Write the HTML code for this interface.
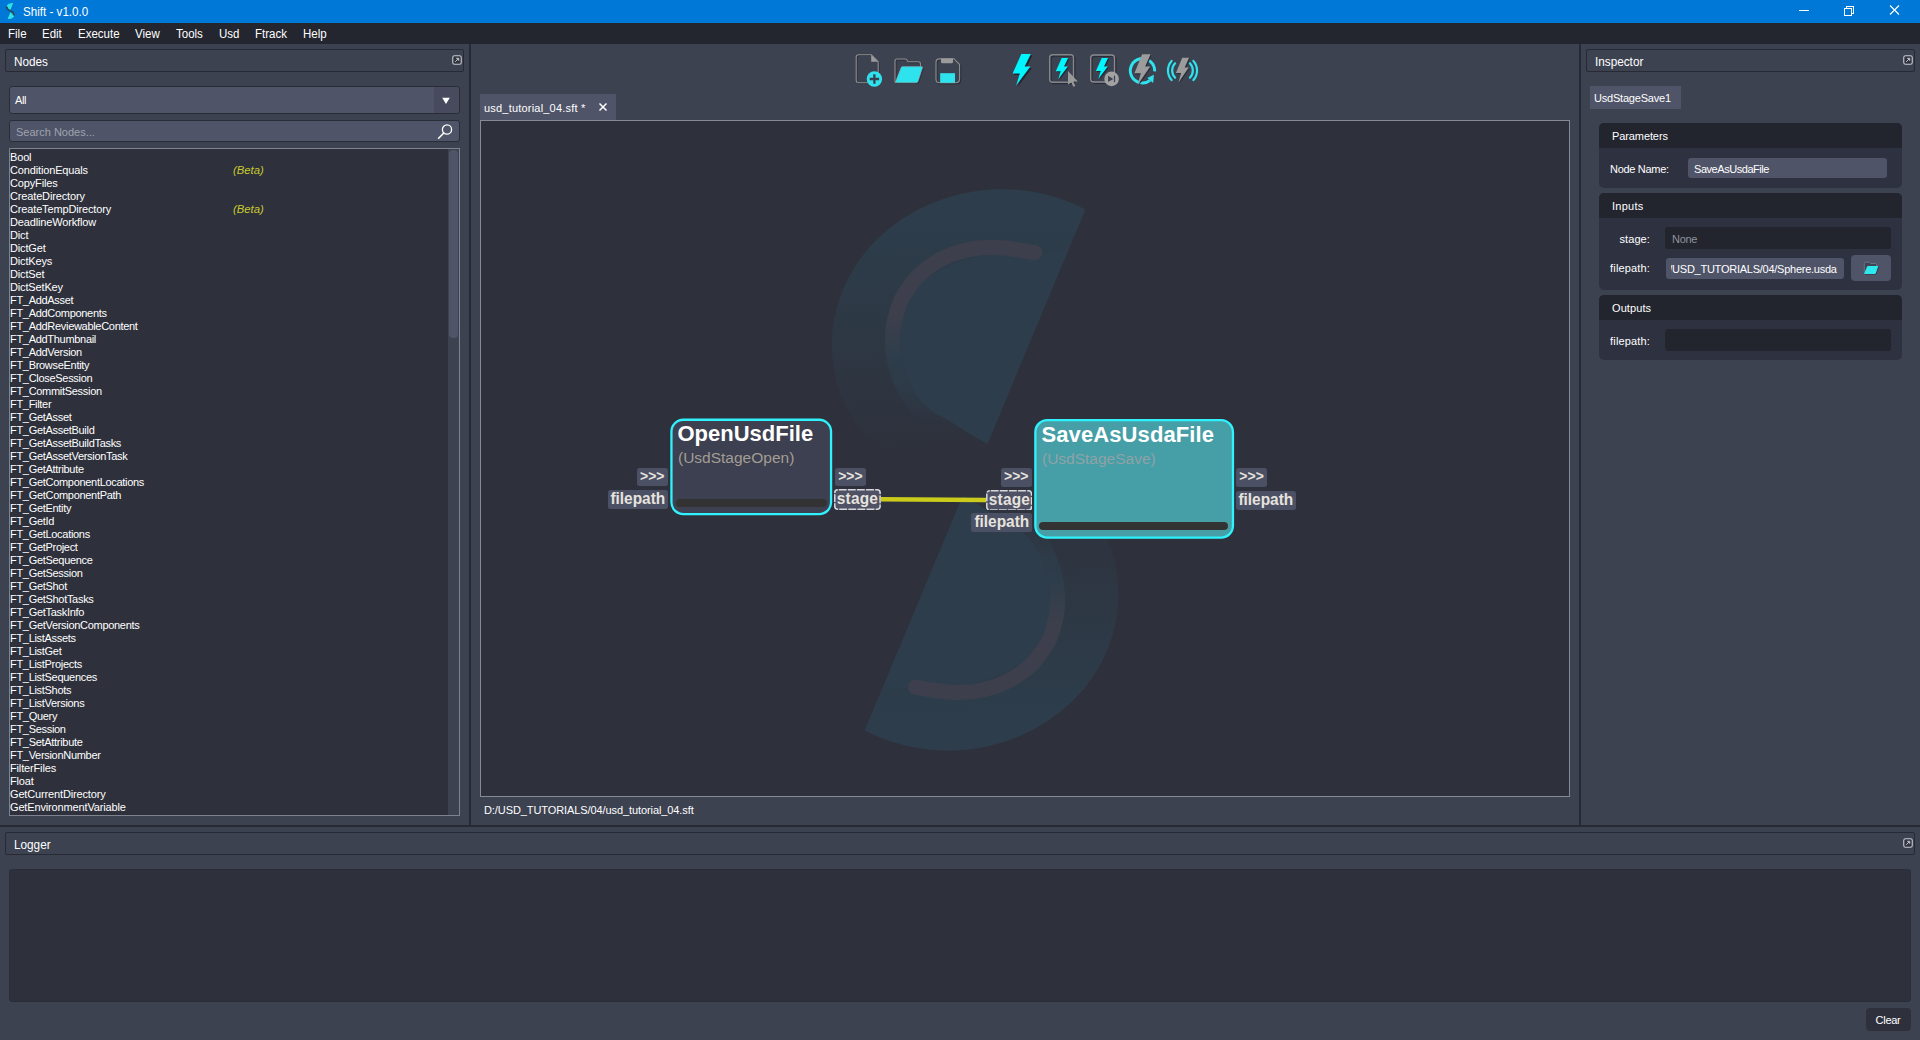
<!DOCTYPE html>
<html><head><meta charset="utf-8"><title>Shift - v1.0.0</title>
<style>
*{box-sizing:border-box;margin:0;padding:0}
html,body{width:1920px;height:1040px;overflow:hidden;background:#3d4251;font-family:"Liberation Sans",sans-serif;color:#fff}
.abs{position:absolute}
div,span,svg{position:absolute}
.t{white-space:nowrap;line-height:1}
#titlebar{left:0;top:0;width:1920px;height:23px;background:#0078d7}
#menubar{left:0;top:23px;width:1920px;height:21px;background:#23252f}
.menu{top:27px;transform:scaleX(.935);transform-origin:left;font-size:12.3px;color:#fff;white-space:nowrap;line-height:14px}
.hdr{height:23px;border:1px solid #272a35;border-radius:2px;background:#3d4251}
.hdr .t{left:8px;top:5px;font-size:12.5px;line-height:14px;color:#fff;transform:scaleX(.94);transform-origin:left}
.vline{width:2px;background:#272a35}
.hline{height:2px;background:#272a35}
.li{left:10px;height:13px;font-size:11px;letter-spacing:-.15px;line-height:13px;color:#fff;white-space:nowrap;width:430px}
.li .beta{left:223px;top:0;font-style:italic;color:#c9c92e;position:absolute;letter-spacing:0;font-size:11.3px}
.grp{background:#2e3240;border-radius:5px;overflow:hidden}
.grp .gh{left:0;top:0;width:100%;height:25px;background:#22242e}
.lbl{font-size:11px;letter-spacing:-.3px;line-height:13px;color:#fff;white-space:nowrap}
.fld{border-radius:3px;background:#22242e}
.inp{border-radius:3px;background:#4f5468}
.node{border:2.3px solid #2ff0fb;border-radius:13px}
.ntitle{font-weight:bold;font-size:22px;line-height:26px;color:#fff;white-space:nowrap;transform-origin:left top}
.nsub{font-size:15.5px;line-height:18px;white-space:nowrap;transform-origin:left top}
.nbar{background:#333;border-radius:4px}
.chip{background:#4c5064;border-radius:2.5px;color:#e6e3de;font-weight:bold;font-size:15.5px;line-height:18px;text-align:center;white-space:nowrap}
.chip.dash{border-radius:4px;line-height:19.5px;background:#4f5165}
.chip span{position:static;display:inline-block;transform:scaleX(.92);font-size:16.8px}
.chip.dash span{letter-spacing:.2px}
.li.ft{letter-spacing:-.3px}
.chip.arr{font-size:14px;line-height:16.5px}

</style></head>
<body>
<div id="titlebar"></div>
<div class="t" style="left:23px;top:5px;font-size:12.3px;transform:scaleX(.945);transform-origin:left;color:#fff;line-height:14px">Shift - v1.0.0</div>
<svg style="left:1790px;top:0" width="130" height="23" viewBox="0 0 130 23"><g stroke="#fff" stroke-width="1" fill="none" shape-rendering="crispEdges"><path d="M9 10.5h10"/><path d="M54.5 8.5h7v7h-7z"/><path d="M56.5 8.5v-2h7v7h-2"/></g><path d="M100 5.5l9 9M109 5.5l-9 9" stroke="#fff" stroke-width="1.1" fill="none"/></svg>
<svg style="left:5px;top:2px" width="11" height="18" viewBox="0 0 11 18"><path d="M8.2 1L5.200 8.5Q1.300 7 1.800 3.500Q3.500 .6 8.200 1Z" fill="#2fe0e6"/><path d="M2.600 17L5.700 9.400Q9.600 11 9 14.500Q7.300 17.400 2.600 17Z" fill="#2fe0e6"/><path d="M1.500 4.500Q1.800 7.500 5.500 9Q8.800 10.500 9 13.500" fill="none" stroke="#23485c" stroke-width="2" opacity=".9"/></svg>
<div id="menubar"></div>
<div class="menu" style="left:8px">File</div>
<div class="menu" style="left:42px">Edit</div>
<div class="menu" style="left:78px">Execute</div>
<div class="menu" style="left:135px">View</div>
<div class="menu" style="left:176px">Tools</div>
<div class="menu" style="left:219px">Usd</div>
<div class="menu" style="left:255px">Ftrack</div>
<div class="menu" style="left:303px">Help</div>

<!-- splitters -->
<div class="vline" style="left:469px;top:44px;height:782px"></div>
<div class="vline" style="left:1579px;top:44px;height:782px"></div>
<div class="hline" style="left:0;top:825px;width:1920px"></div>

<!-- Nodes panel -->
<div class="hdr" style="left:5px;top:49px;width:459px"><div class="t">Nodes</div></div>
<div style="left:9px;top:86px;width:451px;height:28px;background:#4f5468;border:1px solid #2a2d38;border-radius:3px"></div>
<div style="left:434px;top:87px;width:25px;height:26px;background:#474b5d;border-radius:0 3px 3px 0"></div>
<div class="t" style="left:15px;top:95px;font-size:11px;letter-spacing:-.35px;color:#fff">All</div>
<svg style="left:441px;top:97px" width="10" height="8" viewBox="0 0 10 8"><path d="M1.2 0.8h7.6L5 7z" fill="#fff"/></svg>
<div style="left:9px;top:120px;width:451px;height:22px;background:#4f5468;border:1px solid #2a2d38;border-radius:3px"></div>
<div class="t" style="left:16px;top:127px;font-size:11px;color:#a0a3ae">Search Nodes...</div>
<svg style="left:436px;top:122px" width="20" height="19" viewBox="0 0 20 19"><circle cx="11" cy="7.5" r="4.6" fill="none" stroke="#fff" stroke-width="1.3"/><path d="M7.8 11L2.6 16.2" stroke="#fff" stroke-width="1.6" stroke-linecap="round"/></svg>
<div style="left:9px;top:148px;width:451px;height:668px;background:#2e313c;border:1px solid #7f8390"></div>
<div style="left:448px;top:149px;width:11px;height:666px;background:#3d4251"></div>
<div style="left:449px;top:150px;width:8.5px;height:188px;background:#4f5468;border-radius:4px"></div>
<div class="li" style="top:151px">Bool</div>
<div class="li" style="top:164px">ConditionEquals<span class="beta">(Beta)</span></div>
<div class="li" style="top:177px">CopyFiles</div>
<div class="li" style="top:190px">CreateDirectory</div>
<div class="li" style="top:203px">CreateTempDirectory<span class="beta">(Beta)</span></div>
<div class="li" style="top:216px">DeadlineWorkflow</div>
<div class="li" style="top:229px">Dict</div>
<div class="li" style="top:242px">DictGet</div>
<div class="li" style="top:255px">DictKeys</div>
<div class="li" style="top:268px">DictSet</div>
<div class="li" style="top:281px">DictSetKey</div>
<div class="li ft" style="top:294px">FT_AddAsset</div>
<div class="li ft" style="top:307px">FT_AddComponents</div>
<div class="li ft" style="top:320px">FT_AddReviewableContent</div>
<div class="li ft" style="top:333px">FT_AddThumbnail</div>
<div class="li ft" style="top:346px">FT_AddVersion</div>
<div class="li ft" style="top:359px">FT_BrowseEntity</div>
<div class="li ft" style="top:372px">FT_CloseSession</div>
<div class="li ft" style="top:385px">FT_CommitSession</div>
<div class="li ft" style="top:398px">FT_Filter</div>
<div class="li ft" style="top:411px">FT_GetAsset</div>
<div class="li ft" style="top:424px">FT_GetAssetBuild</div>
<div class="li ft" style="top:437px">FT_GetAssetBuildTasks</div>
<div class="li ft" style="top:450px">FT_GetAssetVersionTask</div>
<div class="li ft" style="top:463px">FT_GetAttribute</div>
<div class="li ft" style="top:476px">FT_GetComponentLocations</div>
<div class="li ft" style="top:489px">FT_GetComponentPath</div>
<div class="li ft" style="top:502px">FT_GetEntity</div>
<div class="li ft" style="top:515px">FT_GetId</div>
<div class="li ft" style="top:528px">FT_GetLocations</div>
<div class="li ft" style="top:541px">FT_GetProject</div>
<div class="li ft" style="top:554px">FT_GetSequence</div>
<div class="li ft" style="top:567px">FT_GetSession</div>
<div class="li ft" style="top:580px">FT_GetShot</div>
<div class="li ft" style="top:593px">FT_GetShotTasks</div>
<div class="li ft" style="top:606px">FT_GetTaskInfo</div>
<div class="li ft" style="top:619px">FT_GetVersionComponents</div>
<div class="li ft" style="top:632px">FT_ListAssets</div>
<div class="li ft" style="top:645px">FT_ListGet</div>
<div class="li ft" style="top:658px">FT_ListProjects</div>
<div class="li ft" style="top:671px">FT_ListSequences</div>
<div class="li ft" style="top:684px">FT_ListShots</div>
<div class="li ft" style="top:697px">FT_ListVersions</div>
<div class="li ft" style="top:710px">FT_Query</div>
<div class="li ft" style="top:723px">FT_Session</div>
<div class="li ft" style="top:736px">FT_SetAttribute</div>
<div class="li ft" style="top:749px">FT_VersionNumber</div>
<div class="li" style="top:762px">FilterFiles</div>
<div class="li" style="top:775px">Float</div>
<div class="li" style="top:788px">GetCurrentDirectory</div>
<div class="li" style="top:801px">GetEnvironmentVariable</div>

<!-- center -->
<svg style="left:850px;top:48px" width="360" height="44" viewBox="850 48 360 44">
<defs>
<path id="bolt" d="M8.7 0H18.2L12.1 12.5H17.8L3.6 31.3L7.2 19.5H0Z"/>
</defs>
<!-- new file -->
<g fill="none" stroke-linejoin="round">
<path d="M859.5 55.5h12.5l7 7v18.5q0 2.5-2.5 2.5h-17q-2.5 0-2.5-2.5v-23q0-2.5 2.5-2.5z" stroke="#2a2d38" stroke-width="1.2"/>
<path d="M858.7 54.7h12.5l7 7v18.5q0 2.5-2.5 2.5h-17q-2.5 0-2.5-2.5v-23q0-2.5 2.5-2.5z" stroke="#8e8e90" stroke-width="1.1"/>
</g>
<path d="M871.2 54.7l7 7h-7z" fill="#9b9b9b"/>
<circle cx="874.4" cy="79" r="7.7" fill="#2ee3ee"/>
<path d="M874.4 74.3v9.4M869.7 79h9.4" stroke="#3a3f4d" stroke-width="2.3"/>
<!-- open -->
<g fill="none" stroke-linejoin="round">
<path d="M896 82.8q-1 0-1-1.2V61q0-2 2-2h8.2q1.2 0 1.8 1l1 1.8h10q2.600 0 2.600 2.600v2" stroke="#2a2d38" stroke-width="1.2" transform="translate(0.9 0.9)"/>
<path d="M896 82.8q-1 0-1-1.2V61q0-2 2-2h8.2q1.2 0 1.8 1l1 1.8h10q2.600 0 2.600 2.600v2" stroke="#8e8e90" stroke-width="1.1"/>
</g>
<path d="M901 67.800q.5-1.200 1.800-1.200h18.800q1.300 0 .9 1.300l-4.300 13.300q-.5 1.600-2.200 1.600h-19.500q-1.300 0-.9-1.300z" fill="#2a2d38" transform="translate(1 1)"/>
<path d="M901 67.800q.5-1.200 1.800-1.200h18.800q1.300 0 .9 1.300l-4.300 13.300q-.5 1.600-2.200 1.600h-19.500q-1.300 0-.9-1.300z" fill="#2ee3ee" stroke="#9a9a9a" stroke-width=".5"/>
<!-- save -->
<g fill="none" stroke-linejoin="round">
<path d="M939.500 58.900h14.500l5.600 5.600v14.300q0 4-4 4h-16.100q-3.500 0-3.500-3.500v-16.900q0-3.500 3.500-3.500z" stroke="#2a2d38" stroke-width="1.3" transform="translate(1 1)"/>
<path d="M939.500 58.900h14.500l5.600 5.600v14.300q0 4-4 4h-16.100q-3.500 0-3.500-3.500v-16.900q0-3.500 3.500-3.500z" stroke="#8e8e90" stroke-width="1.1"/>
</g>
<path d="M941 58.500h12v3.300q0 1.500-1.500 1.500h-9q-1.500 0-1.500-1.500z" fill="#9b9b9b"/>
<rect x="940.200" y="73.200" width="14.800" height="9.600" fill="#2ee3ee"/>
<!-- bolt 1 -->
<use href="#bolt" x="1014.1" y="55.600" fill="#23252f"/>
<use href="#bolt" x="1012.600" y="54.100" fill="#00f6ff"/>
<!-- bolt in box + cursor -->
<rect x="1051" y="56" width="23.800" height="27.600" rx="3" fill="none" stroke="#2a2d38" stroke-width="1.400"/>
<rect x="1049.700" y="54.700" width="23.800" height="27.600" rx="3" fill="none" stroke="#85868c" stroke-width="1.400"/>
<g transform="translate(1056.800 58.900) scale(.68)"><use href="#bolt" fill="#23252f"/></g>
<g transform="translate(1055.800 57.900) scale(.68)"><use href="#bolt" fill="#00f6ff"/></g>
<path d="M1068 71V84.800L1071.300 82.200L1073.300 86.800L1075.300 86L1073.300 81.600H1077.800Z" fill="#9a9a9a"/>
<!-- bolt in box + play -->
<rect x="1092" y="56.300" width="23.800" height="27" rx="3" fill="none" stroke="#2a2d38" stroke-width="1.300"/>
<rect x="1090.700" y="55" width="23.800" height="27" rx="3" fill="none" stroke="#8a8b90" stroke-width="1.300"/>
<g transform="translate(1096.900 59) scale(.67)"><use href="#bolt" fill="#23252f"/></g>
<g transform="translate(1095.900 58) scale(.67)"><use href="#bolt" fill="#00f6ff"/></g>
<circle cx="1111.600" cy="78.900" r="7.300" fill="#a2a2a2"/>
<path d="M1108.100 75.700v6.400l5.200-3.200z" fill="#3d4251"/>
<path d="M1114.500 75.700v6.400" stroke="#3d4251" stroke-width="1.200"/>
<!-- refresh bolt -->
<path d="M1154.670 71.350A12.200 12.200 0 1 0 1150.100 80.300" fill="none" stroke="#2ee3ee" stroke-width="3"/>
<path d="M1153.900 74.800L1147.300 78L1153.200 82.900Z" fill="#2ee3ee"/>
<g transform="translate(1135.400 55.250) scale(.89 .98)"><use href="#bolt" fill="#2a2d38"/></g>
<g transform="translate(1134.400 54.250) scale(.89 .98)"><use href="#bolt" fill="#9c9c9c"/></g>
<!-- waves bolt -->
<g fill="none" stroke="#2ee3ee" stroke-width="2.200" stroke-linecap="round">
<path d="M1175.100 63.300A10.300 10.300 0 0 0 1175.100 77.700"/>
<path d="M1189.900 63.300A10.300 10.300 0 0 1 1189.900 77.700"/>
<path d="M1171.600 60.900A14.500 14.500 0 0 0 1171.600 80.100"/>
<path d="M1193.400 60.900A14.500 14.500 0 0 1 1193.400 80.100"/>
</g>
<g transform="translate(1176.900 58.700) scale(.725 .79)"><use href="#bolt" fill="#2a2d38"/></g>
<g transform="translate(1175.900 57.700) scale(.725 .79)"><use href="#bolt" fill="#9c9c9c"/></g>
</svg>

<div style="left:480px;top:94px;width:136px;height:27px;background:#4f5468"></div>
<div class="t" style="left:484px;top:103px;font-size:11px;letter-spacing:.2px;color:#fff">usd_tutorial_04.sft *</div>
<svg style="left:598px;top:102px" width="10" height="10" viewBox="0 0 10 10"><path d="M1.5 1.5l7 7M8.5 1.5l-7 7" stroke="#fff" stroke-width="1.5"/></svg>
<div id="graph" style="left:480px;top:120px;width:1090px;height:677px;background:#2e313c;border:1px solid #868a96;overflow:hidden">
<svg style="left:0;top:0" width="1088" height="675" viewBox="481 121 1088 675">
<defs>
<linearGradient id="gO" gradientUnits="userSpaceOnUse" x1="0" y1="225" x2="0" y2="450"><stop offset="0" stop-color="#2d3d4b"/><stop offset="1" stop-color="#2d3d4b" stop-opacity="0"/></linearGradient>
<linearGradient id="gS" gradientUnits="userSpaceOnUse" x1="0" y1="315" x2="0" y2="428"><stop offset="0" stop-color="#3d3f4c"/><stop offset=".4" stop-color="#2e3d4b"/><stop offset="1" stop-color="#2d3d4b" stop-opacity="0"/></linearGradient>
<clipPath id="cutL"><path d="M1124.7 117.1L890.6 669.5L500 669.5L500 117.1Z"/></clipPath>
<g id="half">
<g clip-path="url(#cutL)"><ellipse cx="1001" cy="343.800" rx="169.200" ry="154.600" transform="rotate(-2.330 1001 343.800)" fill="url(#gO)"/></g>
<path d="M987.7 443.8C984.4 442.0 974.6 436.8 968.1 432.9C961.6 429.0 954.0 423.9 948.5 420.6C943.0 417.3 939.5 415.9 935.4 413.2C931.3 410.5 927.2 407.3 923.9 404.2C920.6 401.1 918.5 398.8 915.8 394.4C913.1 390.0 909.9 384.1 907.6 378.1C905.3 372.1 903.1 365.3 901.9 358.5C900.7 351.7 900.2 343.5 900.2 337.2C900.2 330.9 900.4 327.2 901.9 320.9C903.4 314.6 905.5 306.4 909.2 299.6C912.9 292.8 916.3 286.0 923.9 280.0C931.5 274.0 945.2 267.7 954.6 263.7C964.0 259.7 970.8 257.6 980.0 256.0C989.2 254.4 1005.0 254.3 1010.0 254.0L1068.4 250.0Z" fill="#2d3d4b"/>
<path d="M1034.6 252.7C1031.6 252.2 1023.9 250.5 1016.7 249.6C1009.6 248.7 1000.0 247.2 991.7 247.2C983.4 247.3 975.0 248.1 966.7 250.0C958.4 251.9 949.4 255.0 941.7 258.9C934.1 262.8 926.1 268.7 920.8 273.3C915.4 277.9 913.0 281.8 909.6 286.6C906.2 291.4 902.9 295.6 900.2 302.0C897.6 308.4 895.0 318.4 893.7 325.0C892.4 331.6 892.5 335.5 892.6 341.3C892.7 347.1 893.1 353.3 894.5 360.0C895.9 366.7 898.4 374.9 901.0 381.3C903.6 387.7 906.7 393.6 910.0 398.5C913.3 403.4 916.6 407.1 920.6 410.7C924.6 414.3 928.8 417.0 933.7 420.1C938.6 423.2 947.3 427.9 950.0 429.5" fill="none" stroke="url(#gS)" stroke-width="15" stroke-linecap="round"/>
</g>
</defs>
<use href="#half"/>
<use href="#half" transform="rotate(180 975.1 469.9)"/>
<path d="M880.5 499.2L986.3 500" stroke="#cbcb1c" stroke-width="4.6"/>
<rect x="671.450" y="419.750" width="159.600" height="94.400" rx="11.850" fill="#3c4050" stroke="#2ff2fd" stroke-width="2.300"/>
<rect x="1035.350" y="420.150" width="197.600" height="117.500" rx="11.850" fill="#469ea6" stroke="#2ff2fd" stroke-width="2.300"/>
</svg>
<div id="gw" style="left:-481px;top:-121px;width:1920px;height:1040px">
<div class="ntitle" style="left:677.5px;top:420.5px">OpenUsdFile</div>
<div class="nsub" style="left:678px;top:449px;color:#a39d94">(UsdStageOpen)</div>
<div class="nbar" style="left:676px;top:499px;width:151px;height:8px"></div>
<div class="chip arr" style="left:637px;top:468px;width:30.5px;height:18.3px">&gt;&gt;&gt;</div>
<div class="chip arr" style="left:835.2px;top:468px;width:30.5px;height:18.3px">&gt;&gt;&gt;</div>
<div class="chip" style="left:608px;top:490px;width:60px;height:19px"><span>filepath</span></div>
<div class="chip dash" style="left:833.900px;top:489px;width:46.900px;height:21.100px"><svg style="left:0;top:0" width="46.9" height="21.1" viewBox="0 0 46.9 21.1"><rect x=".8" y=".8" width="45.3" height="19.5" rx="3" fill="none" stroke="#d8d8dc" stroke-width="1.500" stroke-dasharray="7.800 1.300" stroke-dashoffset="-1"/></svg><span>stage</span></div>

<div class="ntitle" style="left:1041.5px;top:421.5px;letter-spacing:.1px">SaveAsUsdaFile</div>
<div class="nsub" style="left:1042px;top:450px;color:#8fa3a8">(UsdStageSave)</div>
<div class="nbar" style="left:1039px;top:522px;width:189px;height:8px"></div>
<div class="chip arr" style="left:1001px;top:468.3px;width:30.5px;height:18.7px">&gt;&gt;&gt;</div>
<div class="chip arr" style="left:1236.2px;top:468.3px;width:30.8px;height:18.7px">&gt;&gt;&gt;</div>
<div class="chip dash" style="left:985.900px;top:489.600px;width:46.300px;height:20.900px"><svg style="left:0;top:0" width="46.3" height="20.9" viewBox="0 0 46.3 20.9"><rect x=".8" y=".8" width="44.699999999999996" height="19.299999999999997" rx="3" fill="none" stroke="#d8d8dc" stroke-width="1.500" stroke-dasharray="7.800 1.300" stroke-dashoffset="-1"/></svg><span>stage</span></div>
<div class="chip" style="left:971px;top:513px;width:61px;height:19px"><span>filepath</span></div>
<div class="chip" style="left:1236px;top:491px;width:60px;height:19px"><span>filepath</span></div>
</div>
</div>
<div class="t" style="left:484px;top:805px;font-size:11px;letter-spacing:-.09px;color:#fff">D:/USD_TUTORIALS/04/usd_tutorial_04.sft</div>

<!-- Inspector -->
<div class="hdr" style="left:1586px;top:49px;width:329px"><div class="t">Inspector</div></div>
<div style="left:1590px;top:86px;width:91px;height:23px;background:#4f5468"></div>
<div class="t" style="left:1594px;top:93px;font-size:11px;letter-spacing:-.2px;color:#fff">UsdStageSave1</div>

<div class="grp" style="left:1599px;top:123px;width:303px;height:65px"><div class="gh"></div></div>
<div class="lbl" style="left:1612px;top:130px;letter-spacing:-.1px">Parameters</div>
<div class="lbl" style="left:1610px;top:163px">Node Name:</div>
<div class="inp" style="left:1688px;top:157.700px;width:199.300px;height:20.600px"></div>
<div class="lbl" style="left:1694px;top:163px;letter-spacing:-.45px">SaveAsUsdaFile</div>

<div class="grp" style="left:1599px;top:193px;width:303px;height:97px"><div class="gh"></div></div>
<div class="lbl" style="left:1612px;top:200px;letter-spacing:.25px">Inputs</div>
<div class="lbl" style="left:1550px;width:100px;text-align:right;top:233px;letter-spacing:.1px">stage:</div>
<div class="fld" style="left:1665px;top:227px;width:226px;height:22px"></div>
<div class="lbl" style="left:1672px;top:233px;color:#8f929d">None</div>
<div class="lbl" style="left:1550px;width:100px;text-align:right;top:262px;letter-spacing:.15px">filepath:</div>
<div class="inp" style="left:1666px;top:258px;width:178px;height:20.5px"><div style="left:5px;top:0;width:170px;height:20px;overflow:hidden"><div class="lbl" style="left:-1.7px;top:5px;letter-spacing:-.25px">/USD_TUTORIALS/04/Sphere.usda</div></div></div>
<div style="left:1851px;top:255px;width:40px;height:26px;background:#4f5468;border-radius:4px"></div>
<svg style="left:1862px;top:260px" width="18" height="16" viewBox="1862 260 18 16"><path d="M1864.300 273.600V263.300q0-1.100 1.100-1.100h3.800q.8 0 1.100.6l.4.700h4.600q1.400 0 1.400 1.400v1.500" fill="#3f4454" stroke="#7d8192" stroke-width=".7"/><path d="M1867.100 266.600q.2-.7 1-.7h9.500q.8 0 .5.800l-2.200 6.500q-.3.800-1.100.8h-10q-.8 0-.5-.8z" fill="#2a2d38" transform="translate(.6 .6)"/><path d="M1867.100 266.600q.2-.7 1-.7h9.500q.8 0 .5.800l-2.200 6.500q-.3.800-1.100.8h-10q-.8 0-.5-.8z" fill="#2ee8f0"/></svg>

<div class="grp" style="left:1599px;top:295px;width:303px;height:65px"><div class="gh"></div></div>
<div class="lbl" style="left:1612px;top:302px;letter-spacing:.1px">Outputs</div>
<div class="lbl" style="left:1550px;width:100px;text-align:right;top:335px;letter-spacing:.15px">filepath:</div>
<div class="fld" style="left:1665px;top:329px;width:226px;height:22px"></div>

<!-- Logger -->
<div class="hdr" style="left:5px;top:832px;width:1910px"><div class="t">Logger</div></div>
<div style="left:9px;top:869px;width:1902px;height:133px;background:#2e313c;border:1px solid #2a2d38;border-radius:3px"></div>
<div style="left:1866px;top:1008px;width:45px;height:23px;background:#2e313c;border-radius:4px"></div>
<div class="t" style="left:1875.5px;top:1015px;font-size:11px;letter-spacing:-.25px;color:#fff">Clear</div>

<!-- float icons -->
<svg class="flt" style="left:452px;top:55px" width="10" height="10" viewBox="0 0 10 10"><rect x="0.75" y="0.75" width="8.5" height="8.5" rx="1.8" fill="#30343f" stroke="#c9cbd2" stroke-width="1.1"/><path d="M3.2 6.8L6.6 3.4M4.2 3.3h2.5v2.5" stroke="#c9cbd2" stroke-width="1" fill="none"/></svg>
<svg class="flt" style="left:1903px;top:55px" width="10" height="10" viewBox="0 0 10 10"><rect x="0.75" y="0.75" width="8.5" height="8.5" rx="1.8" fill="#30343f" stroke="#c9cbd2" stroke-width="1.1"/><path d="M3.2 6.8L6.6 3.4M4.2 3.3h2.5v2.5" stroke="#c9cbd2" stroke-width="1" fill="none"/></svg>
<svg class="flt" style="left:1903px;top:838px" width="10" height="10" viewBox="0 0 10 10"><rect x="0.75" y="0.75" width="8.5" height="8.5" rx="1.8" fill="#30343f" stroke="#c9cbd2" stroke-width="1.1"/><path d="M3.2 6.8L6.6 3.4M4.2 3.3h2.5v2.5" stroke="#c9cbd2" stroke-width="1" fill="none"/></svg>

</body></html>
